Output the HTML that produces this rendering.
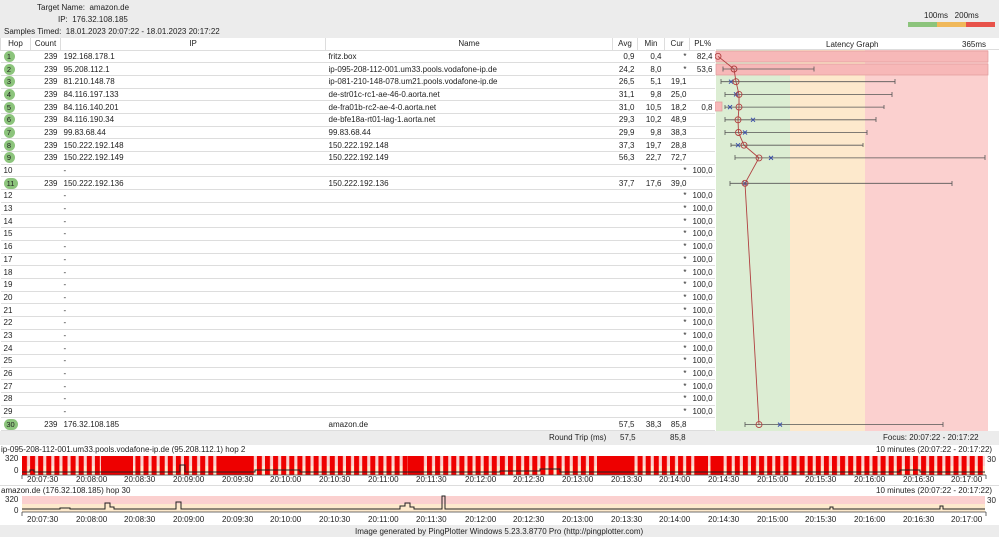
<!DOCTYPE html>
<html><head><meta charset="utf-8"><style>
*{margin:0;padding:0;box-sizing:border-box}
body{width:999px;height:537px;background:#ececec;font-family:"Liberation Sans",sans-serif;font-size:8px;color:#222;position:relative;overflow:hidden}
.a{position:absolute;white-space:nowrap}
table{position:absolute;left:0;top:38px;border-collapse:collapse;table-layout:fixed;width:715px;background:#fff}
td,th{height:12.7px;border-bottom:1px solid #ddd;padding:0 3px;font-weight:normal;overflow:hidden;white-space:nowrap;line-height:11px}
th{background:#fff;border-left:1px solid #ddd;text-align:center;height:12px}
td.r{text-align:right}
.b{display:inline-block;width:11px;height:11px;border-radius:50%;background:#8cc47c;text-align:center;line-height:11px;font-size:7.5px}
.b2{width:14px;border-radius:6px}
</style></head><body>
<div class="a" style="left:37px;top:3px">Target Name:&nbsp; amazon.de</div>
<div class="a" style="left:58px;top:15px">IP:&nbsp; 176.32.108.185</div>
<div class="a" style="left:4px;top:27px">Samples Timed:&nbsp; 18.01.2023 20:07:22 - 18.01.2023 20:17:22</div>
<div class="a" style="left:924px;top:11px">100ms&nbsp;&nbsp; 200ms</div>
<div class="a" style="left:908px;top:22px;width:29px;height:5px;background:#8cc47c"></div>
<div class="a" style="left:937px;top:22px;width:29px;height:5px;background:#f0b85a"></div>
<div class="a" style="left:966px;top:22px;width:29px;height:5px;background:#e8524a"></div>
<div class="a" style="left:715px;top:38px;width:284px;height:12px;background:#fff;border-bottom:1px solid #ddd"></div>
<div class="a" style="left:826px;top:40px">Latency Graph</div>
<div class="a" style="left:962px;top:40px">365ms</div>
<table>
<colgroup><col style="width:30px"><col style="width:30px"><col style="width:265px"><col style="width:287px"><col style="width:25px"><col style="width:27px"><col style="width:25px"><col style="width:26px"></colgroup>
<tr><th>Hop</th><th>Count</th><th>IP</th><th>Name</th><th>Avg</th><th>Min</th><th>Cur</th><th>PL%</th></tr>
<tr><td><span class="b">1</span></td><td class="r">239</td><td>192.168.178.1</td><td>fritz.box</td><td class="r">0,9</td><td class="r">0,4</td><td class="r">*</td><td class="r">82,4</td></tr>
<tr><td><span class="b">2</span></td><td class="r">239</td><td>95.208.112.1</td><td>ip-095-208-112-001.um33.pools.vodafone-ip.de</td><td class="r">24,2</td><td class="r">8,0</td><td class="r">*</td><td class="r">53,6</td></tr>
<tr><td><span class="b">3</span></td><td class="r">239</td><td>81.210.148.78</td><td>ip-081-210-148-078.um21.pools.vodafone-ip.de</td><td class="r">26,5</td><td class="r">5,1</td><td class="r">19,1</td><td></td></tr>
<tr><td><span class="b">4</span></td><td class="r">239</td><td>84.116.197.133</td><td>de-str01c-rc1-ae-46-0.aorta.net</td><td class="r">31,1</td><td class="r">9,8</td><td class="r">25,0</td><td></td></tr>
<tr><td><span class="b">5</span></td><td class="r">239</td><td>84.116.140.201</td><td>de-fra01b-rc2-ae-4-0.aorta.net</td><td class="r">31,0</td><td class="r">10,5</td><td class="r">18,2</td><td class="r">0,8</td></tr>
<tr><td><span class="b">6</span></td><td class="r">239</td><td>84.116.190.34</td><td>de-bfe18a-rt01-lag-1.aorta.net</td><td class="r">29,3</td><td class="r">10,2</td><td class="r">48,9</td><td></td></tr>
<tr><td><span class="b">7</span></td><td class="r">239</td><td>99.83.68.44</td><td>99.83.68.44</td><td class="r">29,9</td><td class="r">9,8</td><td class="r">38,3</td><td></td></tr>
<tr><td><span class="b">8</span></td><td class="r">239</td><td>150.222.192.148</td><td>150.222.192.148</td><td class="r">37,3</td><td class="r">19,7</td><td class="r">28,8</td><td></td></tr>
<tr><td><span class="b">9</span></td><td class="r">239</td><td>150.222.192.149</td><td>150.222.192.149</td><td class="r">56,3</td><td class="r">22,7</td><td class="r">72,7</td><td></td></tr>
<tr><td>10</td><td></td><td>-</td><td></td><td></td><td></td><td class="r">*</td><td class="r">100,0</td></tr>
<tr><td><span class="b b2">11</span></td><td class="r">239</td><td>150.222.192.136</td><td>150.222.192.136</td><td class="r">37,7</td><td class="r">17,6</td><td class="r">39,0</td><td></td></tr>
<tr><td>12</td><td></td><td>-</td><td></td><td></td><td></td><td class="r">*</td><td class="r">100,0</td></tr>
<tr><td>13</td><td></td><td>-</td><td></td><td></td><td></td><td class="r">*</td><td class="r">100,0</td></tr>
<tr><td>14</td><td></td><td>-</td><td></td><td></td><td></td><td class="r">*</td><td class="r">100,0</td></tr>
<tr><td>15</td><td></td><td>-</td><td></td><td></td><td></td><td class="r">*</td><td class="r">100,0</td></tr>
<tr><td>16</td><td></td><td>-</td><td></td><td></td><td></td><td class="r">*</td><td class="r">100,0</td></tr>
<tr><td>17</td><td></td><td>-</td><td></td><td></td><td></td><td class="r">*</td><td class="r">100,0</td></tr>
<tr><td>18</td><td></td><td>-</td><td></td><td></td><td></td><td class="r">*</td><td class="r">100,0</td></tr>
<tr><td>19</td><td></td><td>-</td><td></td><td></td><td></td><td class="r">*</td><td class="r">100,0</td></tr>
<tr><td>20</td><td></td><td>-</td><td></td><td></td><td></td><td class="r">*</td><td class="r">100,0</td></tr>
<tr><td>21</td><td></td><td>-</td><td></td><td></td><td></td><td class="r">*</td><td class="r">100,0</td></tr>
<tr><td>22</td><td></td><td>-</td><td></td><td></td><td></td><td class="r">*</td><td class="r">100,0</td></tr>
<tr><td>23</td><td></td><td>-</td><td></td><td></td><td></td><td class="r">*</td><td class="r">100,0</td></tr>
<tr><td>24</td><td></td><td>-</td><td></td><td></td><td></td><td class="r">*</td><td class="r">100,0</td></tr>
<tr><td>25</td><td></td><td>-</td><td></td><td></td><td></td><td class="r">*</td><td class="r">100,0</td></tr>
<tr><td>26</td><td></td><td>-</td><td></td><td></td><td></td><td class="r">*</td><td class="r">100,0</td></tr>
<tr><td>27</td><td></td><td>-</td><td></td><td></td><td></td><td class="r">*</td><td class="r">100,0</td></tr>
<tr><td>28</td><td></td><td>-</td><td></td><td></td><td></td><td class="r">*</td><td class="r">100,0</td></tr>
<tr><td>29</td><td></td><td>-</td><td></td><td></td><td></td><td class="r">*</td><td class="r">100,0</td></tr>
<tr><td><span class="b b2">30</span></td><td class="r">239</td><td>176.32.108.185</td><td>amazon.de</td><td class="r">57,5</td><td class="r">38,3</td><td class="r">85,8</td><td></td></tr>
</table>
<svg class="a" style="left:715px;top:50px" width="284" height="381">
<rect x="0" y="0" width="284" height="381" fill="#fff"/>
<rect x="1" y="0" width="74" height="381" fill="#dcedd3"/>
<rect x="75" y="0" width="75" height="381" fill="#fde9cc"/>
<rect x="150" y="0" width="123" height="381" fill="#fbd0cf"/>
<rect x="1" y="1" width="272" height="11" fill="#f7b8b8" stroke="#e09a9a" stroke-width=".7"/>
<rect x="1" y="14" width="272" height="11" fill="#f7b8b8" stroke="#e09a9a" stroke-width=".7"/>
<rect x="0" y="52" width="7" height="9" fill="#f7b8b8" stroke="#e09a9a" stroke-width=".7"/>
<g stroke="#555" stroke-width=".8" fill="none">
<path d="M8 19H99M8 16.5V21.5M99 16.5V21.5"/>
<path d="M6 31.7H180M6 29V34M180 29V34"/>
<path d="M10 44.4H177M10 42V47M177 42V47"/>
<path d="M10 57.1H169M10 55V59M169 55V59"/>
<path d="M10 69.8H161M10 67V72M161 67V72"/>
<path d="M10 82.5H152M10 80V85M152 80V85"/>
<path d="M16 95.2H148M16 93V97M148 93V97"/>
<path d="M20 107.9H270M20 105V110M270 105V110"/>
<path d="M15 133.3H237M15 131V136M237 131V136"/>
<path d="M30 374.6H228M30 372V377M228 372V377"/>
</g>
<g stroke="#3b4fa8" stroke-width="1">
<path d="M14 29.7l4 4M18 29.7l-4 4M19 42.4l4 4M23 42.4l-4 4M13 55.1l4 4M17 55.1l-4 4M36 67.8l4 4M40 67.8l-4 4M28 80.5l4 4M32 80.5l-4 4M21 93.2l4 4M25 93.2l-4 4M54 105.9l4 4M58 105.9l-4 4M28 131.3l4 4M32 131.3l-4 4M63 372.6l4 4M67 372.6l-4 4"/>
</g>
<polyline fill="none" stroke="#b04040" stroke-width=".9" points="3,6.3 19,19 21,31.7 24,44.4 24,57.1 23,69.8 23.5,82.5 29,95.2 44,107.9 30,133.3 44,374.6"/>
<g fill="none" stroke="#b04040" stroke-width=".9">
<circle cx="3" cy="6.3" r="3"/><circle cx="19" cy="19" r="3"/><circle cx="21" cy="31.7" r="3"/><circle cx="24" cy="44.4" r="3"/><circle cx="24" cy="57.1" r="3"/><circle cx="23" cy="69.8" r="3"/><circle cx="23.5" cy="82.5" r="3"/><circle cx="29" cy="95.2" r="3"/><circle cx="44" cy="107.9" r="3"/><circle cx="30" cy="133.3" r="3"/><circle cx="44" cy="374.6" r="3"/>
</g>
</svg>
<div class="a" style="left:0;top:431px;width:999px;height:13px;background:#ececec"></div>
<div class="a" style="left:549px;top:433px">Round Trip (ms)</div>
<div class="a" style="left:620px;top:433px">57,5</div>
<div class="a" style="left:670px;top:433px">85,8</div>
<div class="a" style="left:883px;top:433px">Focus: 20:07:22 - 20:17:22</div>
<div class="a" style="left:0;top:445px;width:999px;height:90px;background:#fff"></div>
<div class="a" style="left:1px;top:445px">ip-095-208-112-001.um33.pools.vodafone-ip.de (95.208.112.1) hop 2</div>
<div class="a" style="left:876px;top:445px">10 minutes (20:07:22 - 20:17:22)</div>
<div class="a" style="left:5px;top:454px">320</div><div class="a" style="left:14px;top:466px">0</div>
<div class="a" style="left:987px;top:455px">30</div>
<svg class="a" style="left:0;top:454px" width="999" height="36">
<defs><pattern id="p" x="22" y="0" width="8.1" height="24" patternUnits="userSpaceOnUse"><rect x="0" y="0" width="5" height="24" fill="#ee0000"/></pattern></defs>
<rect x="22" y="2" width="963" height="10" fill="#fbd0cf"/>
<rect x="22" y="12" width="963" height="9" fill="#fde9cc"/>
<rect x="22" y="2" width="963" height="19" fill="url(#p)"/>
<g fill="#ee0000"><rect x="101" y="2" width="32" height="19"/><rect x="217" y="2" width="36" height="19"/><rect x="408" y="2" width="13" height="19"/><rect x="597" y="2" width="34" height="19"/><rect x="696" y="2" width="12" height="19"/><rect x="712" y="2" width="11" height="19"/></g>
<polyline fill="none" stroke="#222" stroke-width="1" points="22,18 30,18 30,16 34,16 34,18 180,18 180,11 185,11 185,18 255,18 255,16 300,16 300,18 500,18 500,17 540,17 540,15 560,15 560,18 900,18 900,16 920,16 920,18 985,18"/>
<path d="M22 21H986M22 21V25M986 21V25" stroke="#444" stroke-width=".8"/>
</svg>
<div class="a" style="left:0;top:475px;width:999px;font-size:8px">
<span class="a" style="left:27px">20:07:30</span><span class="a" style="left:76px">20:08:00</span><span class="a" style="left:124px">20:08:30</span><span class="a" style="left:173px">20:09:00</span><span class="a" style="left:222px">20:09:30</span><span class="a" style="left:270px">20:10:00</span><span class="a" style="left:319px">20:10:30</span><span class="a" style="left:368px">20:11:00</span><span class="a" style="left:416px">20:11:30</span><span class="a" style="left:465px">20:12:00</span><span class="a" style="left:513px">20:12:30</span><span class="a" style="left:562px">20:13:00</span><span class="a" style="left:611px">20:13:30</span><span class="a" style="left:659px">20:14:00</span><span class="a" style="left:708px">20:14:30</span><span class="a" style="left:757px">20:15:00</span><span class="a" style="left:805px">20:15:30</span><span class="a" style="left:854px">20:16:00</span><span class="a" style="left:903px">20:16:30</span><span class="a" style="left:951px">20:17:00</span></div>
<div class="a" style="left:0;top:485px;width:999px;border-top:1px solid #ddd"></div>
<div class="a" style="left:1px;top:486px">amazon.de (176.32.108.185) hop 30</div>
<div class="a" style="left:876px;top:486px">10 minutes (20:07:22 - 20:17:22)</div>
<div class="a" style="left:5px;top:495px">320</div><div class="a" style="left:14px;top:506px">0</div>
<div class="a" style="left:987px;top:496px">30</div>
<svg class="a" style="left:0;top:494px" width="999" height="24">
<rect x="22" y="2" width="963" height="8" fill="#fbd0cf"/>
<rect x="22" y="10" width="963" height="8" fill="#fde9cc"/>
<polyline fill="none" stroke="#222" stroke-width="1" points="22,15 60,15 60,14 70,14 70,15 105,15 105,9 110,9 110,13 114,13 114,15 176,15 176,8 181,8 181,15 400,15 400,12 405,12 405,9 410,9 410,13 414,13 414,15 442,15 442,2 445,2 445,15 830,15 830,13 833,13 833,15 940,15 940,12 943,12 943,15 985,15"/>
<path d="M22 18H986M22 18V22M986 18V22" stroke="#444" stroke-width=".8"/>
</svg>
<div class="a" style="left:0;top:515px;width:999px">
<span class="a" style="left:27px">20:07:30</span><span class="a" style="left:76px">20:08:00</span><span class="a" style="left:124px">20:08:30</span><span class="a" style="left:173px">20:09:00</span><span class="a" style="left:222px">20:09:30</span><span class="a" style="left:270px">20:10:00</span><span class="a" style="left:319px">20:10:30</span><span class="a" style="left:368px">20:11:00</span><span class="a" style="left:416px">20:11:30</span><span class="a" style="left:465px">20:12:00</span><span class="a" style="left:513px">20:12:30</span><span class="a" style="left:562px">20:13:00</span><span class="a" style="left:611px">20:13:30</span><span class="a" style="left:659px">20:14:00</span><span class="a" style="left:708px">20:14:30</span><span class="a" style="left:757px">20:15:00</span><span class="a" style="left:805px">20:15:30</span><span class="a" style="left:854px">20:16:00</span><span class="a" style="left:903px">20:16:30</span><span class="a" style="left:951px">20:17:00</span></div>
<div class="a" style="left:0;top:525px;width:999px;height:12px;background:#ececec"></div>
<div class="a" style="left:355px;top:527px">Image generated by PingPlotter Windows 5.23.3.8770 Pro (http://pingplotter.com)</div>
</body></html>
